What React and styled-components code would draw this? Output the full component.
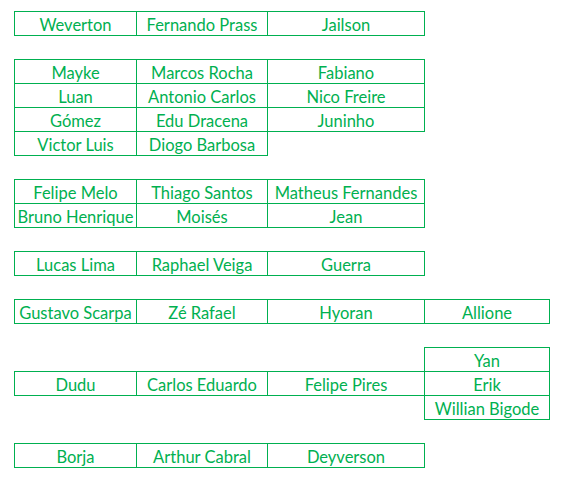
import React from 'react';
import styled, { createGlobalStyle } from 'styled-components';

const GlobalStyle = createGlobalStyle`
  html, body {
    margin: 0;
    padding: 0;
    background: #ffffff;
  }
`;

const Sheet = styled.div`
  padding: 11px 0 0 14px;
  font-family: Lato, 'Liberation Sans', sans-serif;
`;

const Grid = styled.table`
  border-collapse: collapse;
  table-layout: fixed;
  width: 536px;
`;

const Col = styled.col`
  width: ${(p) => p.$w}px;
`;

const Row = styled.tr`
  height: 24px;
`;

const Cell = styled.td`
  padding: 0 1px 0;
  height: 23px;
  box-sizing: border-box;
  text-align: center;
  vertical-align: bottom;
  white-space: nowrap;
  overflow: hidden;
  color: #00b050;
  font-size: 16.5px;
  line-height: 19px;
  border: ${(p) => (p.$boxed ? '1px solid #00b050' : 'none')};
`;

const widths = [122, 131, 157, 125];

const rows = [
  ['Weverton', 'Fernando Prass', 'Jailson'],
  [],
  ['Mayke', 'Marcos Rocha', 'Fabiano'],
  ['Luan', 'Antonio Carlos', 'Nico Freire'],
  ['Gómez', 'Edu Dracena', 'Juninho'],
  ['Victor Luis', 'Diogo Barbosa'],
  [],
  ['Felipe Melo', 'Thiago Santos', 'Matheus Fernandes'],
  ['Bruno Henrique', 'Moisés', 'Jean'],
  [],
  ['Lucas Lima', 'Raphael Veiga', 'Guerra'],
  [],
  ['Gustavo Scarpa', 'Zé Rafael', 'Hyoran', 'Allione'],
  [],
  [null, null, null, 'Yan'],
  ['Dudu', 'Carlos Eduardo', 'Felipe Pires', 'Erik'],
  [null, null, null, 'Willian Bigode'],
  [],
  ['Borja', 'Arthur Cabral', 'Deyverson'],
];

export default function App() {
  return (
    <Sheet>
      <GlobalStyle />
      <Grid>
        <colgroup>
          {widths.map((w, i) => (
            <Col key={i} $w={w} />
          ))}
        </colgroup>
        <tbody>
          {rows.map((row, r) => (
            <Row key={r}>
              {widths.map((_, c) => {
                const name = row[c];
                return (
                  <Cell key={c} $boxed={!!name}>
                    {name || ''}
                  </Cell>
                );
              })}
            </Row>
          ))}
        </tbody>
      </Grid>
    </Sheet>
  );
}
